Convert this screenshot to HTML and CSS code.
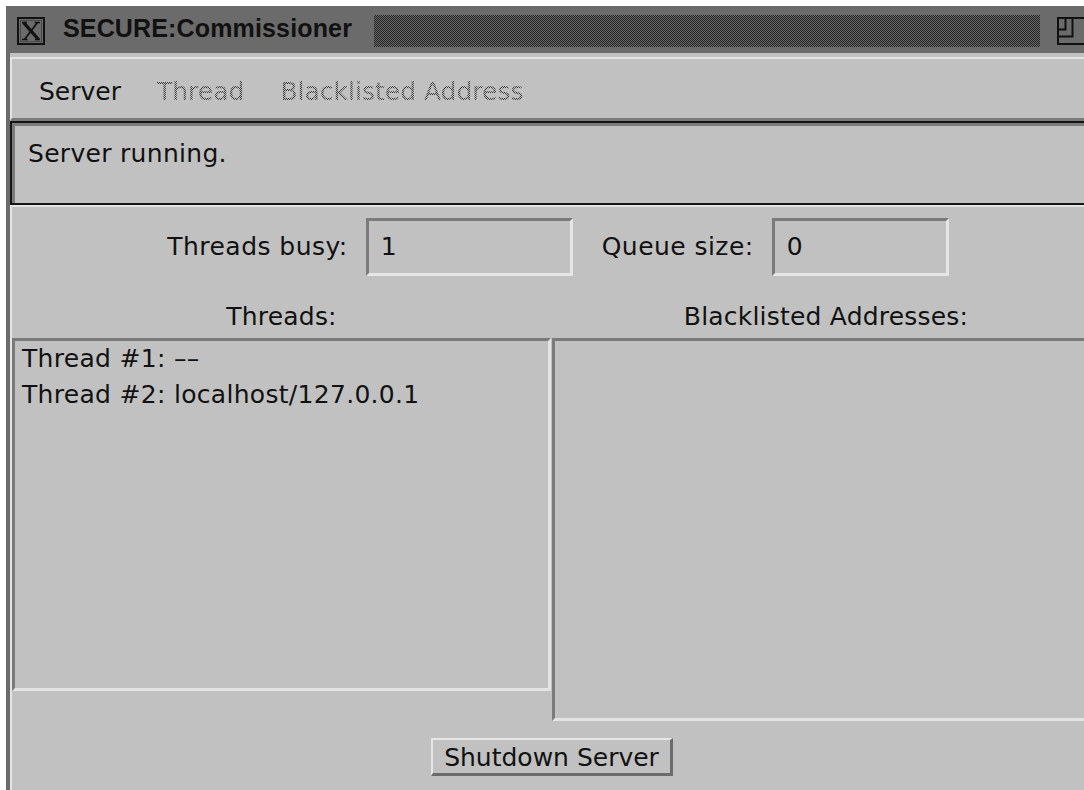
FILE: index.html
```html
<!DOCTYPE html>
<html lang="en">
<head>
<meta charset="utf-8">
<title>SECURE:Commissioner</title>
<link rel="stylesheet" href="styles.css">
</head>
<body>
<div class="desk">
  <div class="window">
    <div class="titlebar">
      <span class="wm-btn close">
        <svg width="28" height="28" viewBox="0 0 28 28">
          <rect x="1" y="1" width="26" height="26" fill="none" stroke="#111" stroke-width="2"/>
          <rect x="3.5" y="3.5" width="21" height="21" fill="none" stroke="#4a4a4a" stroke-width="1"/>
          <path d="M6.5 5.5 L21.5 22.5" stroke="#111" stroke-width="3.4" stroke-linecap="butt"/>
          <path d="M20.5 5.5 L7.5 22.5" stroke="#111" stroke-width="1.7"/>
          <path d="M5 5.5 H10 M17.5 5.5 H23 M5 22.5 H10.5 M18 22.5 H23" stroke="#111" stroke-width="1.5"/>
        </svg>
      </span>
      <span class="title">SECURE:Commissioner</span>
      <span class="grip"></span>
      <span class="wm-btn max">
        <svg width="30" height="28" viewBox="0 0 30 28">
          <rect x="1" y="1" width="32" height="26" fill="none" stroke="#111" stroke-width="2"/>
          <path d="M8.5 1 V12.5 H1 M15.5 1 V19.5 H1" fill="none" stroke="#111" stroke-width="2"/>
        </svg>
      </span>
    </div>
    <div class="frame">
      <div class="menubar">
        <span class="menu">Server</span>
        <span class="menu disabled">Thread</span>
        <span class="menu disabled">Blacklisted Address</span>
      </div>
      <div class="status">Server running.</div>
      <div class="panel">
        <div class="counters">
          <span class="counter-label">Threads busy:</span>
          <div class="field field-wide">1</div>
          <span class="counter-label second">Queue size:</span>
          <div class="field field-narrow">0</div>
        </div>
        <div class="lists">
          <div class="column">
            <div class="column-label">Threads:</div>
            <div class="list list-threads">
              <div class="row">Thread #1: ––</div>
              <div class="row">Thread #2: localhost/127.0.0.1</div>
            </div>
          </div>
          <div class="column">
            <div class="column-label">Blacklisted Addresses:</div>
            <div class="list list-blacklist"></div>
          </div>
        </div>
        <div class="actions">
          <button class="button" type="button">Shutdown Server</button>
        </div>
      </div>
    </div>
  </div>
</div>
</body>
</html>
```

FILE: styles.css
```css
html, body {
  margin: 0;
  padding: 0;
  background: #ffffff;
  overflow: hidden;
}

.desk {
  padding: 6px 0 0 6px;
  height: 790px;
  box-sizing: border-box;
}

.window {
  width: 1094px;
  height: 784px;
  display: flex;
  flex-direction: column;
  overflow: hidden;
  font-family: "DejaVu Sans", "Liberation Sans", sans-serif;
  font-size: 25px;
  color: #111;
}

/* ---- window manager title bar ---- */
.titlebar {
  flex: none;
  height: 47px;
  background: #6b6b6b;
  display: flex;
  align-items: flex-start;
}

.wm-btn {
  display: block;
  margin-top: 11px;
  height: 28px;
}

.wm-btn svg {
  display: block;
}

.close {
  margin-left: 11px;
}

.title {
  margin-left: 18px;
  margin-top: 8px;
  font-family: "Liberation Sans", Arial, sans-serif;
  font-weight: bold;
  font-size: 25px;
  line-height: 28px;
  letter-spacing: 0.15px;
  color: #111;
}

.grip {
  display: block;
  margin-left: 22px;
  margin-top: 9px;
  width: 666px;
  height: 32px;
  background: repeating-conic-gradient(#222 0 25%, #6b6b6b 0 50%) 0 0 / 2px 2px;
}

.max {
  margin-left: 17px;
}

/* ---- client area ---- */
.frame {
  flex: 1;
  display: flex;
  flex-direction: column;
  border-left: 4px solid #6b6b6b;
  background: #c1c1c1;
}

.menubar {
  flex: none;
  margin-top: 4px;
  border-top: 2px solid #e3e3e3;
  border-left: 2px solid #e3e3e3;
  border-bottom: 3px solid #7b7b7b;
  padding: 18px 0 11px 27px;
  line-height: 30px;
  display: flex;
  gap: 36px;
}

/* insensitive menu entries are drawn stippled */
.menu.disabled {
  color: transparent;
  background: repeating-conic-gradient(#3a3a3a 0 25%, transparent 0 50%) 0 0 / 2px 2px;
  -webkit-background-clip: text;
  background-clip: text;
}

.status {
  flex: none;
  border: 2px solid #151515;
  box-shadow: inset 3px 3px 0 #7b7b7b;
  padding: 16px 0 34px 16px;
  line-height: 30px;
  letter-spacing: 0.3px;
}

.panel {
  flex: 1;
  border-top: 2px solid #e3e3e3;
  border-left: 2px solid #e3e3e3;
}

.counters {
  margin-top: 11px;
  display: flex;
  align-items: center;
  justify-content: center;
  padding-left: 4px;
}

.counter-label {
  line-height: 30px;
  margin-right: 18px;
  letter-spacing: 0.45px;
}

.counter-label.second {
  margin-left: 29px;
}

.field {
  height: 52px;
  line-height: 52px;
  padding-left: 12px;
  border-style: solid;
  border-width: 3px;
  border-color: #7b7b7b #e6e6e6 #e6e6e6 #7b7b7b;
  box-sizing: content-box;
}

.field-wide {
  width: 189px;
}

.field-narrow {
  width: 159px;
}

.lists {
  margin-top: 26px;
  display: grid;
  grid-template-columns: 539px 1fr;
  column-gap: 1px;
  align-items: start;
}

.column-label {
  text-align: center;
  line-height: 30px;
  margin-bottom: 6px;
  letter-spacing: 0.2px;
}

.list {
  box-sizing: border-box;
  border-style: solid;
  border-width: 3px;
  border-color: #7b7b7b #e3e3e3 #e3e3e3 #7b7b7b;
  padding: 0 0 0 7px;
}

.list-threads {
  height: 353px;
}

.list-blacklist {
  height: 383px;
}

.row {
  line-height: 36px;
  white-space: nowrap;
  letter-spacing: 0.3px;
}

.actions {
  margin-top: 17px;
  display: flex;
  justify-content: center;
  padding-right: 8px;
}

.button {
  font-family: "DejaVu Sans", "Liberation Sans", sans-serif;
  font-size: 25px;
  line-height: 30px;
  color: #111;
  background: #c1c1c1;
  border-style: solid;
  border-width: 2px 3px 3px 2px;
  border-color: #e6e6e6 #6b6b6b #6b6b6b #e6e6e6;
  padding: 3px 11px 0;
  margin: 0;
  border-radius: 0;
}
```
